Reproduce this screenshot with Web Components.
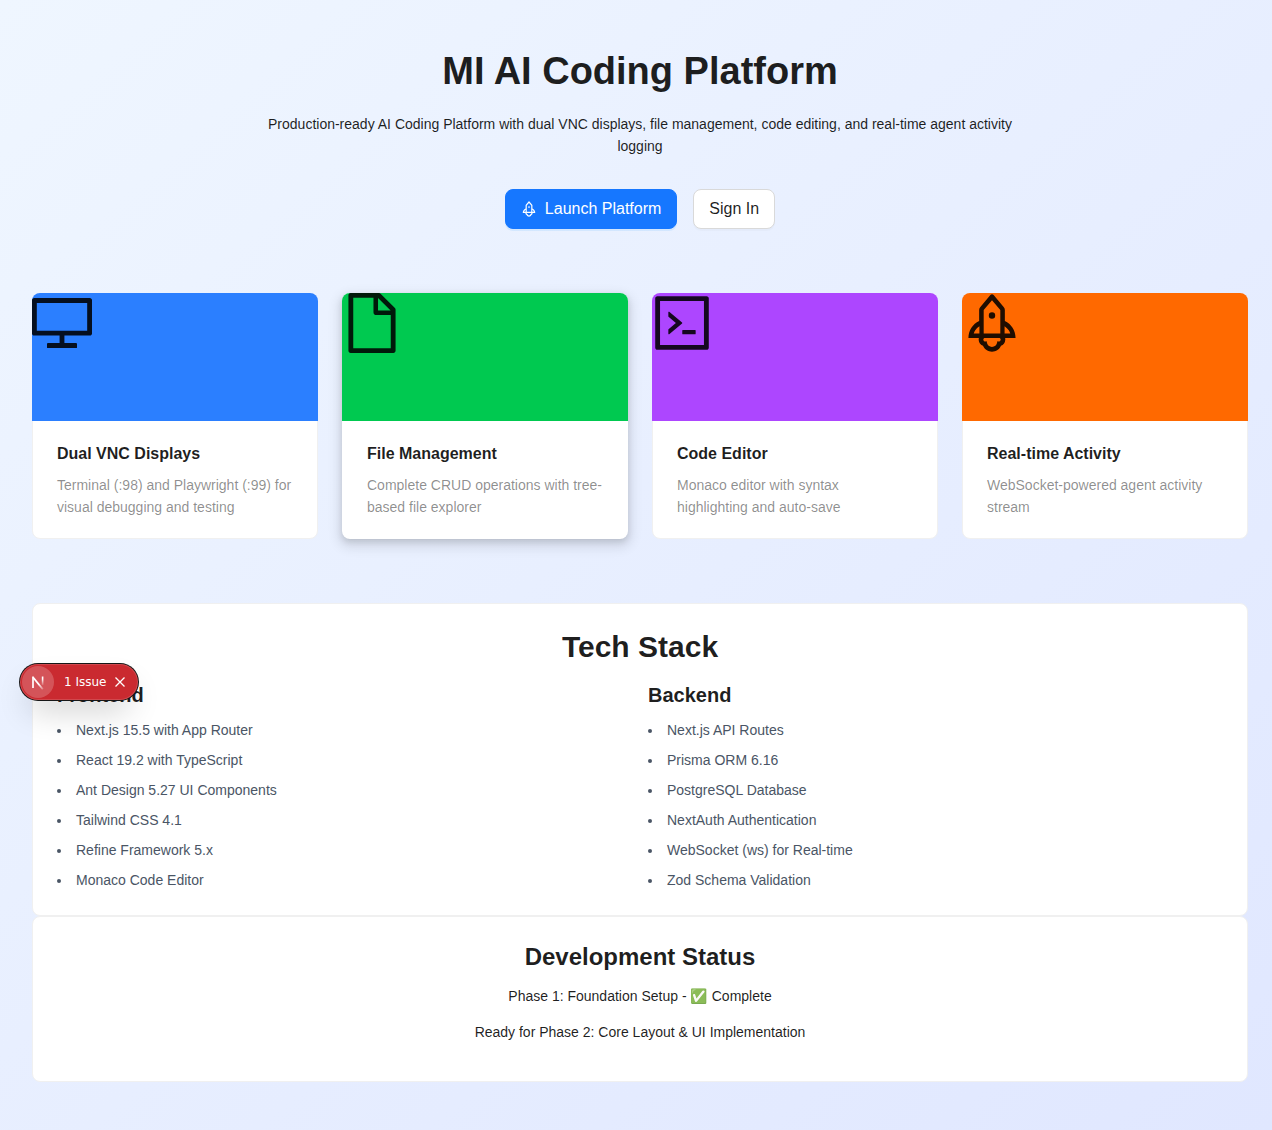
<!DOCTYPE html>
<html lang="en">
<head>
<meta charset="utf-8">
<meta name="viewport" content="width=device-width, initial-scale=1">
<title>MI AI Coding Platform</title>
<style>
  body {
    margin: 0;
    font: 14px/22px "Liberation Sans", "Noto Color Emoji", sans-serif;
    color: rgba(0, 0, 0, .88);
  }
</style>
</head>
<body>
<platform-page>
  <page-hero heading="MI AI Coding Platform">
    Production-ready AI Coding Platform with dual VNC displays, file management, code editing, and real-time agent activity logging
    <action-button slot="actions" variant="primary" icon="rocket">Launch Platform</action-button>
    <action-button slot="actions">Sign In</action-button>
  </page-hero>
  <feature-grid>
    <feature-card icon="desktop" heading="Dual VNC Displays" style="--cover:#2b7fff">Terminal (:98) and Playwright (:99) for visual debugging and testing</feature-card>
    <feature-card icon="file" heading="File Management" raised style="--cover:#00c950">Complete CRUD operations with tree-based file explorer</feature-card>
    <feature-card icon="code" heading="Code Editor" style="--cover:#ad46ff">Monaco editor with syntax highlighting and auto-save</feature-card>
    <feature-card icon="rocket" heading="Real-time Activity" style="--cover:#ff6900">WebSocket-powered agent activity stream</feature-card>
  </feature-grid>
  <tech-stack heading="Tech Stack">
    <stack-list heading="Frontend" items="Next.js 15.5 with App Router|React 19.2 with TypeScript|Ant Design 5.27 UI Components|Tailwind CSS 4.1|Refine Framework 5.x|Monaco Code Editor"></stack-list>
    <stack-list heading="Backend" items="Next.js API Routes|Prisma ORM 6.16|PostgreSQL Database|NextAuth Authentication|WebSocket (ws) for Real-time|Zod Schema Validation"></stack-list>
  </tech-stack>
  <dev-status heading="Development Status">
    <p>Phase 1: Foundation Setup - ✅ Complete</p>
    <p>Ready for Phase 2: Core Layout &amp; UI Implementation</p>
  </dev-status>
</platform-page>
<issue-badge>1 Issue</issue-badge>

<script>
const ICONS = {
  desktop: 'M928 140H96c-17.7 0-32 14.3-32 32v496c0 17.7 14.3 32 32 32h380v112H304c-8.8 0-16 7.2-16 16v48c0 4.4 3.6 8 8 8h432c4.4 0 8-3.6 8-8v-48c0-8.8-7.2-16-16-16H548V700h380c17.7 0 32-14.3 32-32V172c0-17.7-14.3-32-32-32zm-40 488H136V212h752v416z',
  file: 'M854.6 288.6L639.4 73.4c-6-6-14.1-9.4-22.6-9.4H192c-17.7 0-32 14.3-32 32v832c0 17.7 14.3 32 32 32h640c17.7 0 32-14.3 32-32V311.3c0-8.5-3.4-16.7-9.4-22.7zM790.2 326H602V137.8L790.2 326zm1.8 562H232V136h302v216a42 42 0 0042 42h216v494z',
  code: 'M516 673c0 4.4 3.4 8 7.5 8h185c4.1 0 7.5-3.6 7.5-8v-48c0-4.4-3.4-8-7.5-8h-185c-4.1 0-7.5 3.6-7.5 8v48zm-194.9 6.1l192-161c3.8-3.2 3.8-9.1 0-12.3l-192-160.9A7.95 7.95 0 00308 351v62.7c0 2.4 1 4.6 2.9 6.1L420.7 512l-109.8 92.2a8.1 8.1 0 00-2.9 6.1V673c0 6.8 7.9 10.5 13.1 6.1zM880 112H144c-17.7 0-32 14.3-32 32v736c0 17.7 14.3 32 32 32h736c17.7 0 32-14.3 32-32V144c0-17.7-14.3-32-32-32zm-40 728H184V184h656v656z',
  rocket: 'M864 736c0-111.6-65.4-208-160-252.9V317.3c0-15.1-5.3-29.7-15.1-41.2L536.5 95.4C530.1 87.8 521 84 512 84s-18.1 3.8-24.5 11.4L335.1 276.1a63.97 63.97 0 00-15.1 41.2v165.8C225.4 528 160 624.4 160 736h156.5c-2.3 7.2-3.5 15-3.5 23.8 0 22.1 7.6 43.7 21.4 60.8a97.2 97.2 0 0043.1 30.6c23.1 54 75.6 88.8 134.5 88.8 29.1 0 57.3-8.6 81.4-24.8 23.6-15.8 41.9-37.9 53-64a97 97 0 0043.1-30.5 97.52 97.52 0 0021.4-60.8c0-8.4-1.1-16.4-3.1-23.8H864zM762.3 621.4c9.4 14.6 17 30.3 22.5 46.6H700V558.7a211.6 211.6 0 0162.3 62.7zM388 483.1V318.8l124-147 124 147V668H388V483.1zM239.2 668c5.5-16.3 13.1-32 22.5-46.6 16.3-25.2 37.5-46.5 62.3-62.7V668h-84.8zm388.9 116.2c-5.2 3-11.2 4.2-17.1 3.4l-19.5-2.4-2.8 19.4c-5.4 37.9-38.4 66.5-76.7 66.5-38.3 0-71.3-28.6-76.7-66.5l-2.8-19.5-19.5 2.5a27.7 27.7 0 01-17.1-3.5c-8.7-5-14.1-14.3-14.1-24.4 0-10.6 5.9-19.4 14.6-23.8h231.3c8.8 4.5 14.6 13.3 14.6 23.8-.1 10.2-5.5 19.6-14.2 24.5zM464 400a48 48 0 1096 0 48 48 0 10-96 0z'
};
const icon = name => ICONS[name]
  ? `<svg viewBox="64 64 896 896" fill="currentColor" aria-hidden="true"><path d="${ICONS[name]}"/></svg>` : '';

// Registers an element whose open shadow root is filled from a render function.
function define(tag, render) {
  customElements.define(tag, class extends HTMLElement {
    connectedCallback() {
      if (!this.shadowRoot) this.attachShadow({ mode: 'open' }).innerHTML = render(this);
    }
  });
}

const PANEL = `
  :host { display: block; box-sizing: border-box; padding: 24px; background: #fff;
    border: 1px solid #f0f0f0; border-radius: 8px; }`;

define('platform-page', () => `
  <style>
    :host { display: block; box-sizing: border-box; min-height: 100vh; padding: 48px 24px 48px 32px;
      background: linear-gradient(to bottom right, #eff6ff, #e0e7ff); }
  </style>
  <main><slot></slot></main>`);

define('page-hero', el => `
  <style>
    :host { display: block; margin-bottom: 64px; text-align: center; }
    h1 { margin: 0 0 19px; font-size: 38px; line-height: 46px; font-weight: 600; }
    p { max-width: 768px; margin: 0 auto 32px; }
    .actions { display: flex; justify-content: center; gap: 16px; }
  </style>
  <h1>${el.getAttribute('heading')}</h1>
  <p><slot></slot></p>
  <div class="actions"><slot name="actions"></slot></div>`);

define('action-button', el => `
  <style>
    :host { display: block; }
    button { display: flex; align-items: center; gap: 8px; height: 40px; padding: 0 15px;
      border: 1px solid #d9d9d9; border-radius: 8px; background: #fff; color: inherit;
      font: inherit; font-size: 16px; line-height: 24px; cursor: pointer;
      box-shadow: 0 2px 0 rgba(0, 0, 0, .02); }
    :host([variant="primary"]) button { background: #1677ff; border-color: #1677ff; color: #fff;
      box-shadow: 0 2px 0 rgba(5, 145, 255, .1); }
    svg { width: 16px; height: 16px; }
  </style>
  <button type="button">${icon(el.getAttribute('icon'))}<span><slot></slot></span></button>`);

define('feature-grid', () => `
  <style>
    :host { display: grid; grid-template-columns: repeat(4, minmax(0, 1fr)); gap: 24px; margin-bottom: 64px; }
    @media (max-width: 900px) { :host { grid-template-columns: repeat(2, minmax(0, 1fr)); } }
  </style>
  <slot></slot>`);

define('feature-card', el => `
  <style>
    :host { display: block; background: #fff; border: 1px solid #f0f0f0; border-radius: 8px; }
    :host([raised]) { border-color: transparent;
      box-shadow: 0 1px 2px -2px rgba(0, 0, 0, .16), 0 3px 6px rgba(0, 0, 0, .12), 0 5px 12px 4px rgba(0, 0, 0, .09); }
    .cover { height: 128px; margin: -1px -1px 0; border-radius: 8px 8px 0 0; background: var(--cover); }
    svg { display: block; width: 60px; height: 60px; }
    .body { padding: 20px 24px; }
    h3 { margin: 0 0 8px; font-size: 16px; line-height: 25px; font-weight: 600; }
    p { margin: 0; color: rgba(0, 0, 0, .45); }
  </style>
  <div class="cover">${icon(el.getAttribute('icon'))}</div>
  <div class="body">
    <h3>${el.getAttribute('heading')}</h3>
    <p><slot></slot></p>
  </div>`);

define('tech-stack', el => `
  <style>${PANEL}
    h2 { margin: 0 0 15px; font-size: 30px; line-height: 38px; font-weight: 600; text-align: center; }
    .columns { display: grid; grid-template-columns: repeat(2, minmax(0, 1fr)); gap: 16px; }
  </style>
  <h2>${el.getAttribute('heading')}</h2>
  <div class="columns"><slot></slot></div>`);

define('stack-list', el => `
  <style>
    :host { display: block; }
    h3 { margin: 0 0 10px; font-size: 20px; line-height: 28px; font-weight: 600; }
    ul { margin: 0; padding: 0; list-style: disc inside; color: #4a5565; }
    li + li { margin-top: 8px; }
  </style>
  <h3>${el.getAttribute('heading')}</h3>
  <ul>${el.getAttribute('items').split('|').map(item => `<li>${item}</li>`).join('')}</ul>`);

define('dev-status', el => `
  <style>${PANEL}
    :host { text-align: center; }
    h2 { margin: 0 0 12px; font-size: 24px; line-height: 32px; font-weight: 600; }
    ::slotted(p) { margin: 0 0 14px; }
  </style>
  <h2>${el.getAttribute('heading')}</h2>
  <slot></slot>`);

define('issue-badge', () => `
  <style>
    :host { position: absolute; left: 20px; top: 664px; display: flex; align-items: center;
      box-sizing: border-box; height: 36px; padding: 2px; border-radius: 18px;
      background: #ca2a30; color: #fff; font: 500 12px/16px "DejaVu Sans", sans-serif;
      box-shadow: 0 0 0 1px #171717, inset 0 0 0 1px rgba(255, 255, 255, .14), 0 16px 32px -8px rgba(0, 0, 0, .24); }
    button { display: flex; align-items: center; justify-content: center; padding: 0; border: 0;
      background: none; color: inherit; font: inherit; cursor: pointer; }
    .logo { width: 32px; height: 32px; border-radius: 50%; background: rgba(255, 255, 255, .2); }
    .label { padding: 0 8px 0 10px; }
    .close { width: 12px; height: 24px; margin-right: 10px; }
    svg { display: block; }
  </style>
  <button class="logo" type="button" aria-label="Open dev tools">
    <svg width="32" height="32" viewBox="0 0 32 32" fill="none" aria-hidden="true">
      <defs>
        <linearGradient id="diag" x1="17" y1="18" x2="22" y2="24" gradientUnits="userSpaceOnUse"><stop stop-color="#fff"/><stop offset="1" stop-color="#fff" stop-opacity="0.100"/></linearGradient>
        <linearGradient id="stem" x1="20" y1="13" x2="20" y2="20" gradientUnits="userSpaceOnUse"><stop stop-color="#fff"/><stop offset="1" stop-color="#fff" stop-opacity="0"/></linearGradient>
      </defs>
      <path d="M11 11.200L20.800 23.300" stroke="url(#diag)" stroke-width="1.800"/>
      <path d="M11 22V10.500" stroke="#fff" stroke-width="1.700"/>
      <path d="M20.600 10.500V19" stroke="url(#stem)" stroke-width="1.600"/>
    </svg>
  </button>
  <button class="label" type="button"><slot></slot></button>
  <button class="close" type="button" aria-label="Dismiss">
    <svg width="12" height="12" viewBox="0 0 12 12" fill="none" stroke="currentColor" stroke-width="1.300" aria-hidden="true"><path d="M1.500 1.500l9 9M10.500 1.500l-9 9"/></svg>
  </button>`);
</script>
</body>
</html>
